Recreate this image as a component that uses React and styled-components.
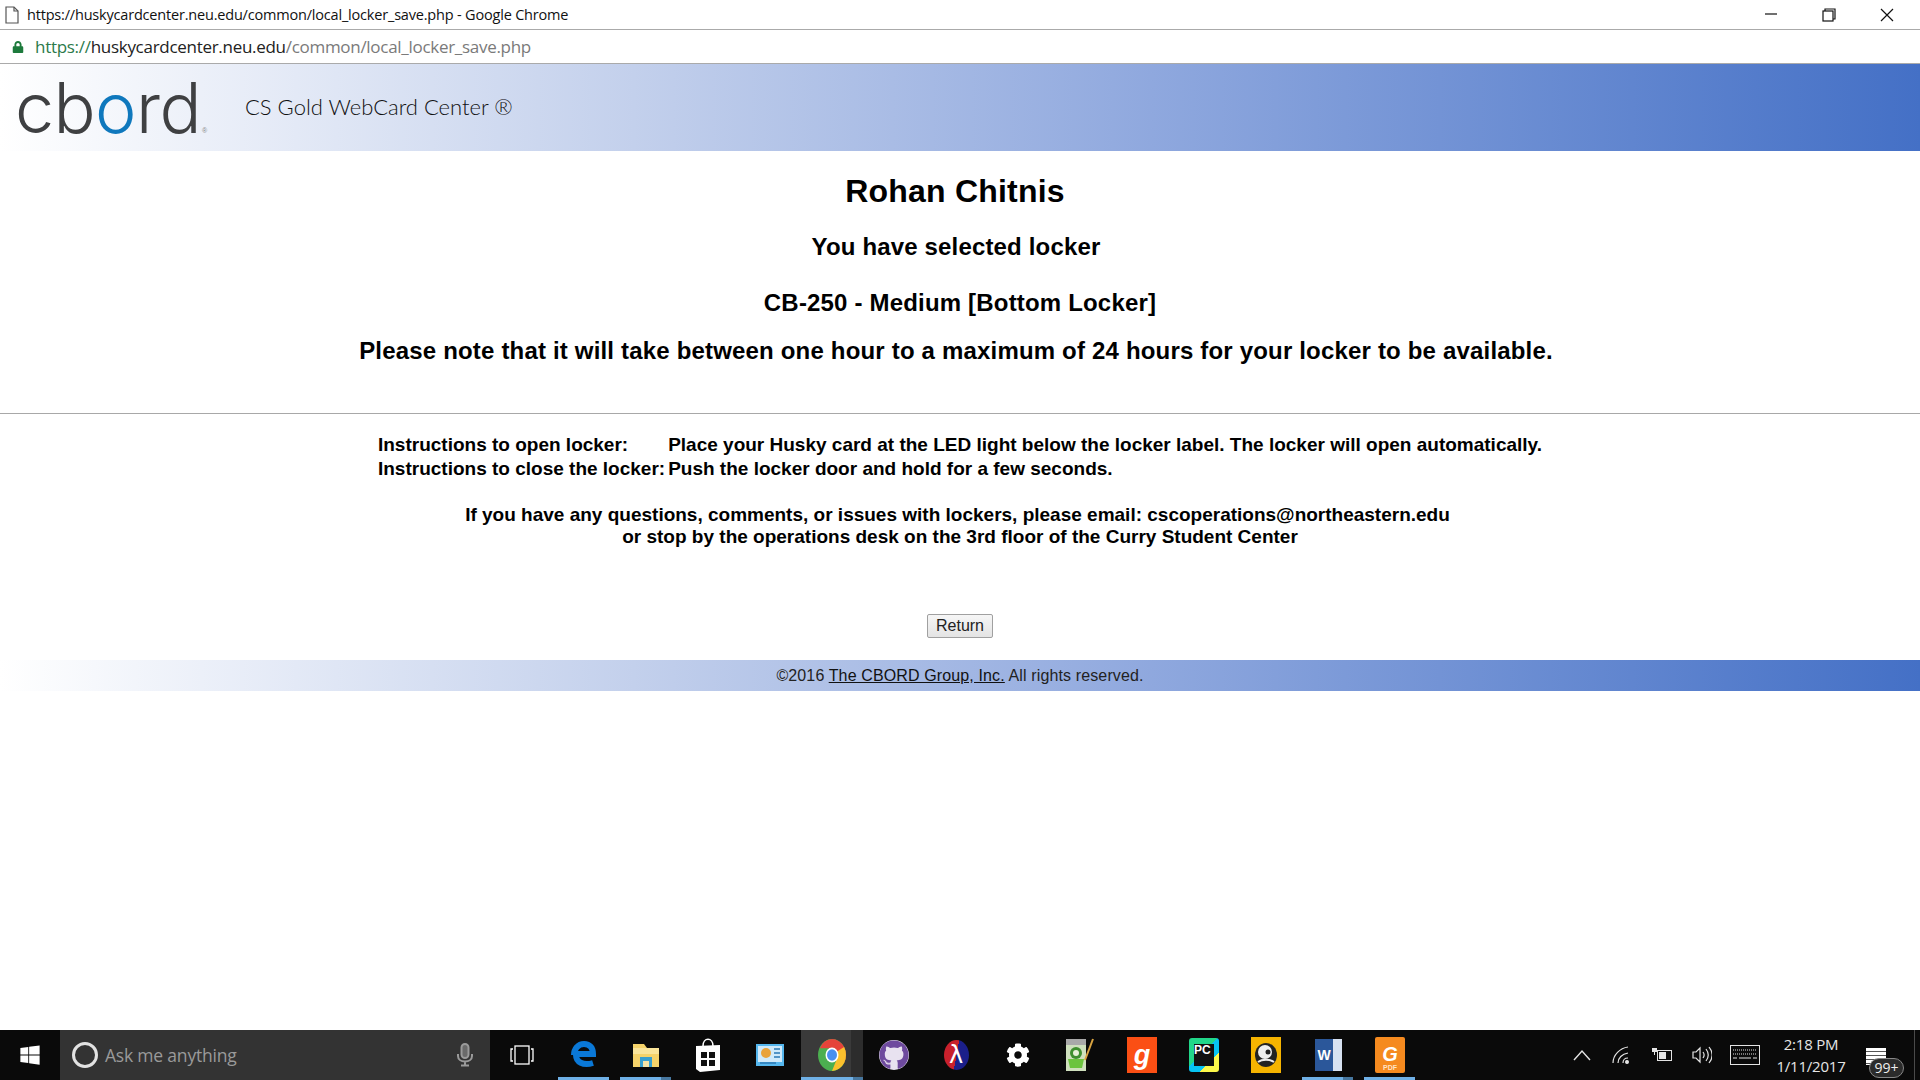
import styled, { createGlobalStyle } from "styled-components";
import { FaWindows, FaGithub, FaCog, FaLock } from "react-icons/fa";

const GlobalStyle = createGlobalStyle`
  html, body { margin: 0; padding: 0; background: #fff; }
  body { font-family: "Liberation Sans", Arial, sans-serif; color: #000; overflow: hidden; }
`;

const Page = styled.div`
  display: flex;
  flex-direction: column;
  height: 1080px;
  width: 1920px;
  overflow: hidden;
`;

/* browser chrome */
const TitleBar = styled.div`
  display: flex;
  align-items: center;
  height: 29px;
  flex: none;
  padding: 0 4px 0 4px;
  border-bottom: 1px solid #aaa;
  background: #fff;
`;

const WindowTitle = styled.span`
  flex: 1;
  margin-left: 7px;
  font: 14.5px "Open Sans", sans-serif;
  letter-spacing: -0.19px;
  color: #111;
`;

const WindowButtons = styled.div`
  display: flex;
  align-items: center;
`;

const WindowButton = styled.div`
  display: flex;
  justify-content: center;
  width: 58px;
`;

const AddressBar = styled.div`
  display: flex;
  align-items: center;
  height: 33px;
  flex: none;
  padding-left: 12px;
  border-bottom: 1px solid #aaa;
  color: #1d7a3c;
  font-size: 12px;
`;

const Url = styled.div`
  margin-left: 11px;
  font: 17px "Open Sans", sans-serif;
  letter-spacing: -0.29px;
  color: #7a7a7a;
`;

const UrlScheme = styled.span`
  color: #2c7a4b;
`;

const UrlHost = styled.span`
  color: #222;
`;

/* cbord header */
const Header = styled.header`
  display: flex;
  align-items: center;
  height: 87px;
  flex: none;
  background: linear-gradient(to right, #fff 0%, #c3d0ec 33%, #8fa8de 60%, #4470c6 100%);
`;

const Logo = styled.div`
  display: flex;
  align-items: flex-end;
  width: 245px;
  padding-left: 15px;
  box-sizing: border-box;
`;

const LogoWord = styled.div`
  font: 350 70px/1 Inter, sans-serif;
  letter-spacing: -0.6px;
  color: #3f4042;
`;

const LogoO = styled.span`
  color: #0f78bd;
`;

const LogoMark = styled.span`
  margin: 0 0 8px 1px;
  font: 7px/8px "Liberation Sans", sans-serif;
  color: #888;
`;

const ProductName = styled.div`
  margin-top: -2px;
  font: 300 22px Lato, sans-serif;
  color: #111;
`;

/* page body */
const Main = styled.main`
  display: flex;
  flex-direction: column;
  flex: none;
`;

const Headline = styled.div`
  margin-top: ${(p) => p.$top}px;
  padding-right: ${(p) => p.$shift || 0}px;
  font-size: ${(p) => p.$size}px;
  line-height: ${(p) => p.$line}px;
  font-weight: 700;
  letter-spacing: ${(p) => p.$spacing || 0}px;
  text-align: center;
`;

const Rule = styled.hr`
  width: 100%;
  height: 1px;
  margin: 47px 0 19px;
  border: none;
  background: #a8a8a8;
`;

const Instructions = styled.div`
  display: grid;
  grid-template-columns: auto auto;
  justify-content: center;
  column-gap: 3px;
  font-size: 19px;
  line-height: 24px;
  font-weight: 700;
`;

const Contact = styled.div`
  margin-top: 23px;
  font-size: 19px;
  line-height: 22px;
  font-weight: 700;
  text-align: center;
`;

const ContactLine = styled.div`
  padding-right: ${(p) => p.$shift || 0}px;
`;

const ButtonRow = styled.div`
  display: flex;
  justify-content: center;
  margin-top: 66px;
`;

const ReturnButton = styled.button`
  width: 66px;
  height: 24px;
  padding: 0;
  border: 1px solid #a0a0a0;
  border-radius: 2px;
  background: linear-gradient(#f6f6f6, #e4e4e4);
  font: 16px "Liberation Sans", sans-serif;
  color: #222;
`;

const Footer = styled.footer`
  height: 31px;
  flex: none;
  margin-top: 22px;
  background: linear-gradient(to right, #fff 0%, #c3d0ec 33%, #8fa8de 60%, #4470c6 100%);
  font-size: 16px;
  line-height: 31px;
  letter-spacing: 0.13px;
  text-align: center;
  color: #222;
`;

const FooterLink = styled.a`
  color: #111;
  text-decoration: underline;
`;

/* windows taskbar */
const Taskbar = styled.div`
  display: flex;
  align-items: stretch;
  height: 50px;
  margin-top: auto;
  flex: none;
  background: #0a0a0a;
  color: #fff;
`;

const StartButton = styled.div`
  display: flex;
  align-items: center;
  justify-content: center;
  width: 60px;
  font-size: 22px;
`;

const SearchBox = styled.div`
  display: flex;
  align-items: center;
  width: 430px;
  padding: 0 17px 0 12px;
  box-sizing: border-box;
  background: #333;
  color: #9a9a9a;
`;

const Cortana = styled.div`
  width: 20px;
  height: 20px;
  flex: none;
  border: 3px solid #e2e2e2;
  border-radius: 50%;
`;

const SearchText = styled.span`
  flex: 1;
  margin-left: 7px;
  font: 17.5px "Open Sans", sans-serif;
  letter-spacing: -0.2px;
`;

const TaskCell = styled.div`
  position: relative;
  display: flex;
  align-items: center;
  justify-content: center;
  width: ${(p) => p.$width || 62}px;
  background: ${(p) =>
    p.$active ? "linear-gradient(to right, #3a3a3a 50px, #2c2c2c 50px)" : "transparent"};

  ${(p) =>
    p.$open &&
    `&::after {
      content: "";
      position: absolute;
      left: ${p.$active ? 0 : 5}px;
      right: ${p.$active ? 0 : 6}px;
      bottom: 0;
      height: 3px;
      background: ${
        p.$stacked
          ? "linear-gradient(to right, #6fb0e6 calc(100% - 10px), #47779f calc(100% - 10px))"
          : "#6fb0e6"
      };
    }`}
`;

const IconTile = styled.div`
  display: flex;
  align-items: center;
  justify-content: center;
  width: 30px;
  height: 36px;
  background: ${(p) => p.$bg};
  color: #fff;
  font: italic 700 27px "Liberation Sans", sans-serif;
`;

const OwlTile = styled.div`
  display: flex;
  align-items: center;
  justify-content: center;
  width: 30px;
  height: 36px;
  background: #f6b400;
`;

const LambdaBall = styled.div`
  display: flex;
  align-items: center;
  justify-content: center;
  width: 25px;
  height: 30px;
  border-radius: 50%;
  background: linear-gradient(100deg, #c8202c 50%, #1b1f8a 50%);
  color: #fff;
  font: 400 24px "DejaVu Sans", sans-serif;
`;

const GithubBall = styled.div`
  display: flex;
  color: #6e4a9e;
  background: #e8e2f0;
  border-radius: 50%;
  font-size: 30px;
`;

const PycharmTile = styled.div`
  width: 30px;
  height: 34px;
  padding: 6px 0 0 5px;
  box-sizing: border-box;
  border-radius: 3px;
  background:
    linear-gradient(#111, #111) center / 20px 22px no-repeat,
    linear-gradient(135deg, #21d789 45%, #07c3f2 45%, #07c3f2 70%, #fcf84a 70%);
  color: #fff;
  font: 700 12px/1 "Liberation Sans", sans-serif;
`;

const FoxitIcon = styled.div`
  display: flex;
  flex-direction: column;
  align-items: center;
  justify-content: flex-end;
  width: 30px;
  height: 36px;
  padding-bottom: 2px;
  box-sizing: border-box;
  border-radius: 2px;
  background: #f58a1f;
  color: #ffe3c4;
  font: 700 7px "Liberation Sans", sans-serif;
`;

const FoxitG = styled.span`
  font: italic 700 20px/1 "Liberation Sans", sans-serif;
  color: #fff;
`;

const WordIcon = styled.div`
  display: flex;
  align-items: center;
  width: 27px;
  height: 32px;
  padding-left: 3px;
  box-sizing: border-box;
  background: linear-gradient(to right, #2b579a 68%, #d7e2f2 68%);
  color: #fff;
  font: 700 14px "Liberation Sans", sans-serif;
`;

const Tray = styled.div`
  display: flex;
  align-items: center;
  margin-left: auto;
`;

const TrayIcon = styled.div`
  display: flex;
  align-items: center;
  justify-content: center;
  width: ${(p) => p.$width || 40}px;
  color: #e4e4e4;
`;

const Clock = styled.div`
  width: 82px;
  padding-left: 2px;
  font: 15px/22px "Open Sans", sans-serif;
  letter-spacing: -0.2px;
  text-align: center;
  color: #e6e6e6;
`;

const Notifications = styled.div`
  position: relative;
  width: 50px;
  height: 100%;
`;

const NoteGlyph = styled.div`
  position: absolute;
  left: 14px;
  top: 18px;
  width: 20px;
  height: 17px;
  background: repeating-linear-gradient(#fff 0 3px, #555 3px 4px);
`;

const NoteBadge = styled.div`
  position: absolute;
  left: 17px;
  top: 28px;
  width: 35px;
  height: 20px;
  box-sizing: border-box;
  border: 1px solid #888;
  border-radius: 10px;
  background: #2b2b2b;
  font: 14px/18px "Open Sans", sans-serif;
  text-align: center;
  color: #eee;
`;

const ShowDesktop = styled.div`
  width: 5px;
  height: 100%;
  margin-left: 12px;
  border-left: 1px solid #4a4a4a;
`;

const PageIcon = () => (
  <svg width="16" height="18" viewBox="0 0 16 18" fill="none" stroke="#555" strokeWidth="1.2">
    <path d="M2 1h8l4 4v12H2z" />
    <path d="M10 1v4h4" />
  </svg>
);

const MinimizeIcon = () => (
  <svg width="14" height="14" viewBox="0 0 14 14" stroke="#111" strokeWidth="1.2">
    <path d="M1 6h12" />
  </svg>
);

const RestoreIcon = () => (
  <svg width="14" height="14" viewBox="0 0 14 14" fill="none" stroke="#111" strokeWidth="1.2">
    <rect x="1" y="3" width="10" height="10" />
    <path d="M3 3V1h10v10h-2" />
  </svg>
);

const CloseIcon = () => (
  <svg width="14" height="14" viewBox="0 0 14 14" stroke="#111" strokeWidth="1.2">
    <path d="M1 1l12 12M13 1L1 13" />
  </svg>
);

const MicIcon = () => (
  <svg width="16" height="24" viewBox="0 0 16 24" fill="none" stroke="#9a9a9a" strokeWidth="2">
    <rect x="4.5" y="1" width="7" height="14" rx="3.5" fill="#6a6a6a" />
    <path d="M1 11v2c0 3.5 3 5.5 7 5.5s7-2 7-5.5v-2M8 18.5V22M4 22.5h8" />
  </svg>
);

const TaskViewIcon = () => (
  <svg width="24" height="20" viewBox="0 0 24 20" fill="none" stroke="#fff" strokeWidth="1.3">
    <rect x="5" y="1" width="14" height="18" />
    <path d="M3 4H1v12h2M21 4h2v12h-2" />
  </svg>
);

const EdgeIcon = () => (
  <svg width="26" height="30" viewBox="0 0 26 30" fill="none" stroke="#0a78d7" strokeWidth="6">
    <path d="M3 15c0-6 4-11 10-11 6 0 9 4 9 10H5" />
    <path d="M5 15c0 7 7 11 17 8" />
  </svg>
);

const FolderIcon = () => (
  <svg width="28" height="28" viewBox="0 0 28 28">
    <path d="M1 3h11l3 4h12v19H1z" fill="#f6d36a" />
    <path d="M1 7h26v6H1z" fill="#fbe59a" />
    <path d="M8 16h12v10H8z" fill="#3aa0cf" />
    <path d="M11 20h6v6h-6z" fill="#f6e3a6" />
  </svg>
);

const StoreIcon = () => (
  <svg width="26" height="36" viewBox="0 0 26 36">
    <path d="M8 9c0-9 10-9 10 0" fill="none" stroke="#fff" strokeWidth="1.6" />
    <path d="M1 9l24-1 0 25-20 2-4-3z" fill="#fff" />
    <path d="M6 15h6v6H6zM14 15h6v6h-6zM6 23h6v6H6zM14 23h6v6h-6z" fill="#111" />
  </svg>
);

const PanelIcon = () => (
  <svg width="28" height="22" viewBox="0 0 28 22">
    <rect width="28" height="22" fill="#55b7ee" />
    <rect x="2" y="2" width="24" height="16" fill="#cfeafb" />
    <circle cx="10" cy="9" r="5" fill="#e9a33b" />
    <path d="M18 5h6M18 9h6M18 13h6M4 19h16" stroke="#2b79b5" strokeWidth="1.5" />
  </svg>
);

const ChromeIcon = () => (
  <svg width="28" height="32" viewBox="-14 -14 28 28" preserveAspectRatio="none">
    <circle r="14" fill="#4caf50" />
    <path d="M0-14A14 14 0 0 1 12.1 7L6 0A6 6 0 0 0 0-6H-12.1A14 14 0 0 1 0-14z" fill="#e5433a" />
    <path d="M12.1-7A14 14 0 0 1 0 14L5 3A6 6 0 0 0 5-3z" fill="#fbc02d" />
    <circle r="6.5" fill="#fff" />
    <circle r="5" fill="#4a8ff0" />
  </svg>
);

const NotepadIcon = () => (
  <svg width="30" height="34" viewBox="0 0 30 34">
    <path d="M1 1h20v32H1z" fill="#cfe0bd" />
    <path d="M1 1h20v6H1z" fill="#a9a9a9" />
    <circle cx="11" cy="15" r="6" fill="#3f8f2f" />
    <circle cx="11" cy="15" r="3" fill="#e8f0d8" />
    <path d="M3 21h16l-2 9H5z" fill="#6cc43e" />
    <path d="M28 1L20 22" stroke="#d9a441" strokeWidth="2" />
  </svg>
);

const OwlIcon = () => (
  <svg width="24" height="26" viewBox="0 0 24 26">
    <ellipse cx="12" cy="13" rx="11" ry="12" fill="#222" />
    <ellipse cx="11" cy="10" rx="7" ry="7" fill="#eee" />
    <circle cx="14" cy="10" r="2.5" fill="#222" />
    <path d="M4 20c4-3 12-3 16 0" stroke="#eee" strokeWidth="2" fill="none" />
  </svg>
);

const ChevronIcon = () => (
  <svg width="20" height="12" viewBox="0 0 20 12" fill="none" stroke="#e4e4e4" strokeWidth="1.4">
    <path d="M2 11l8-9 8 9" />
  </svg>
);

const WifiIcon = () => (
  <svg width="20" height="18" viewBox="0 0 20 18" fill="none" stroke="#e4e4e4" strokeWidth="1.2">
    <path d="M1 17C1 9 8 2 16 1M6 17c0-5 4-9 10-10M11 17c0-3 2-5 5-5" />
    <circle cx="15" cy="16" r="1.4" fill="#e4e4e4" />
  </svg>
);

const BatteryIcon = () => (
  <svg width="20" height="16" viewBox="0 0 20 16">
    <rect x="5.5" y="3.5" width="14" height="10" fill="none" stroke="#e4e4e4" />
    <rect x="7" y="5" width="7" height="7" fill="#e4e4e4" />
    <path d="M0 1h5v4H3v3H2V5H0z" fill="#e4e4e4" />
  </svg>
);

const VolumeIcon = () => (
  <svg width="20" height="20" viewBox="0 0 20 20" fill="none" stroke="#e4e4e4" strokeWidth="1.2">
    <path d="M1 7h3l4-4v14l-4-4H1z" />
    <path d="M11 7c1.5 2 1.5 4 0 6M14 4c3 4 3 8 0 12M17 2c4 5 4 11 0 16" />
  </svg>
);

const KeyboardIcon = () => (
  <svg width="30" height="20" viewBox="0 0 30 20" fill="none" stroke="#e4e4e4">
    <rect x="0.5" y="0.5" width="29" height="19" />
    <path d="M3 5h24M3 9h24" strokeDasharray="1 1" />
    <path d="M3 13h4M9 13h12M23 13h4" />
  </svg>
);

const tasks = [
  { key: "view", icon: <TaskViewIcon />, width: 63 },
  { key: "edge", icon: <EdgeIcon />, open: true },
  { key: "folder", icon: <FolderIcon />, open: true, stacked: true },
  { key: "store", icon: <StoreIcon /> },
  { key: "panel", icon: <PanelIcon /> },
  { key: "chrome", icon: <ChromeIcon />, open: true, active: true, stacked: true },
  { key: "github", icon: <GithubBall><FaGithub /></GithubBall> },
  { key: "lambda", icon: <LambdaBall>λ</LambdaBall> },
  { key: "gear", icon: <FaCog size={24} color="#fff" /> },
  { key: "notepad", icon: <NotepadIcon /> },
  { key: "grammarly", icon: <IconTile $bg="#fb4f14">g</IconTile> },
  { key: "pycharm", icon: <PycharmTile>PC</PycharmTile> },
  { key: "owl", icon: <OwlTile><OwlIcon /></OwlTile> },
  { key: "word", icon: <WordIcon>W</WordIcon>, open: true, stacked: true },
  { key: "foxit", icon: <FoxitIcon><FoxitG>G</FoxitG>PDF</FoxitIcon>, open: true },
];

export default function App() {
  return (
    <Page>
      <GlobalStyle />
      <TitleBar>
        <PageIcon />
        <WindowTitle>https://huskycardcenter.neu.edu/common/local_locker_save.php - Google Chrome</WindowTitle>
        <WindowButtons>
          <WindowButton><MinimizeIcon /></WindowButton>
          <WindowButton><RestoreIcon /></WindowButton>
          <WindowButton><CloseIcon /></WindowButton>
        </WindowButtons>
      </TitleBar>
      <AddressBar>
        <FaLock />
        <Url>
          <UrlScheme>https://</UrlScheme>
          <UrlHost>huskycardcenter.neu.edu</UrlHost>/common/local_locker_save.php
        </Url>
      </AddressBar>

      <Header>
        <Logo>
          <LogoWord>cb<LogoO>o</LogoO>rd</LogoWord>
          <LogoMark>®</LogoMark>
        </Logo>
        <ProductName>CS Gold WebCard Center ®</ProductName>
      </Header>

      <Main>
        <Headline $top={20} $size={32} $line={40} $shift={10} $spacing={0.2}>Rohan Chitnis</Headline>
        <Headline $top={21} $size={24} $line={30} $shift={8} $spacing={0.16}>You have selected locker</Headline>
        <Headline $top={26} $size={24} $line={30} $spacing={0.18}>CB-250 - Medium [Bottom Locker]</Headline>
        <Headline $top={18} $size={24} $line={30} $shift={8} $spacing={0.18}>
          Please note that it will take between one hour to a maximum of 24 hours for your locker to be available.
        </Headline>
        <Rule />
        <Instructions>
          <div>Instructions to open locker:</div>
          <div>Place your Husky card at the LED light below the locker label. The locker will open automatically.</div>
          <div>Instructions to close the locker:</div>
          <div>Push the locker door and hold for a few seconds.</div>
        </Instructions>
        <Contact>
          <ContactLine $shift={5}>
            If you have any questions, comments, or issues with lockers, please email: cscoperations@northeastern.edu
          </ContactLine>
          <ContactLine>or stop by the operations desk on the 3rd floor of the Curry Student Center</ContactLine>
        </Contact>
        <ButtonRow>
          <ReturnButton>Return</ReturnButton>
        </ButtonRow>
        <Footer>
          ©2016 <FooterLink href="#">The CBORD Group, Inc.</FooterLink> All rights reserved.
        </Footer>
      </Main>

      <Taskbar>
        <StartButton><FaWindows /></StartButton>
        <SearchBox>
          <Cortana />
          <SearchText>Ask me anything</SearchText>
          <MicIcon />
        </SearchBox>
        {tasks.map((t) => (
          <TaskCell key={t.key} $width={t.width} $open={t.open} $active={t.active} $stacked={t.stacked}>
            {t.icon}
          </TaskCell>
        ))}
        <Tray>
          <TrayIcon><ChevronIcon /></TrayIcon>
          <TrayIcon><WifiIcon /></TrayIcon>
          <TrayIcon><BatteryIcon /></TrayIcon>
          <TrayIcon><VolumeIcon /></TrayIcon>
          <TrayIcon $width={46}><KeyboardIcon /></TrayIcon>
          <Clock>2:18 PM<br />1/11/2017</Clock>
          <Notifications>
            <NoteGlyph />
            <NoteBadge>99+</NoteBadge>
          </Notifications>
          <ShowDesktop />
        </Tray>
      </Taskbar>
    </Page>
  );
}
